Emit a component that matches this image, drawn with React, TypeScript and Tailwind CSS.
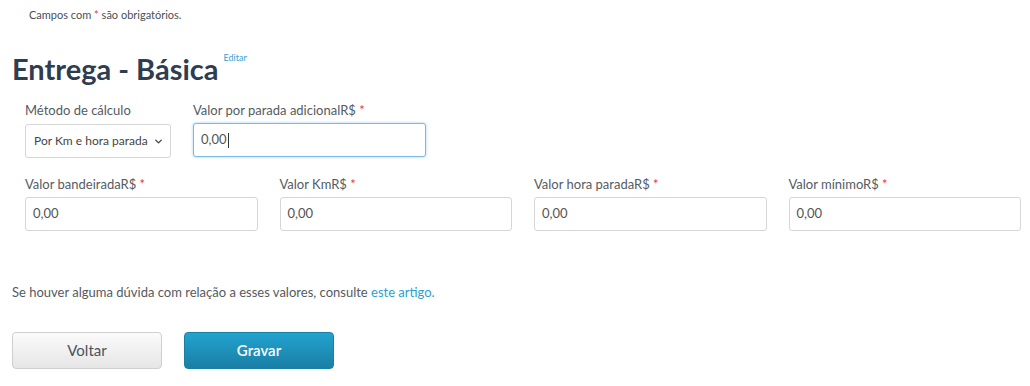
import { ChevronDown } from 'lucide-react'

const FONT = { fontFamily: 'Lato, "Open Sans", sans-serif' }

function Req() {
  return <span className="text-[#e23b3b]"> *</span>
}

function Field({ label, value = '0,00', focused = false }: { label: string; value?: string; focused?: boolean }) {
  return (
    <div className="flex flex-col">
      <label className="text-[13px] leading-[16px] text-[#555b63] mb-[5px]">
        {label}<Req />
      </label>
      <div
        className={
          'h-[34px] rounded-[3px] bg-white flex items-center px-[7px] text-[13px] text-[#555]' +
          (focused
            ? ' border border-[#7db8e8] shadow-[0_0_3px_rgba(102,175,233,0.6)]'
            : ' border border-[#d6d6d6]')
        }
      >
        {value}
        {focused && <span className="w-px h-[15px] bg-[#333] ml-px" />}
      </div>
    </div>
  )
}

export default function App() {
  return (
    <div className="w-[1030px] h-[386px] bg-white text-[#555] overflow-hidden" style={FONT}>
      <p className="pl-[29px] pt-[8px] text-[11px] leading-[14px] text-[#4a4f55]">
        Campos com <span className="text-[#e23b3b]">*</span> são obrigatórios.
      </p>

      <div className="flex items-start pl-[12px] mt-[30px]">
        <h1 className="text-[29px] leading-[34px] font-bold text-[#2e3d4f]">Entrega - Básica</h1>
        <a className="text-[9px] text-[#35a4d4] ml-[5px] mt-[-1px]">Editar</a>
      </div>

      <div className="flex gap-[22px] pl-[25px] mt-[16px]">
        <div className="flex flex-col w-[146px]">
          <label className="text-[13px] leading-[16px] text-[#555b63] mb-[6px]">Método de cálculo</label>
          <div className="h-[34px] rounded-[3px] border border-[#d6d6d6] bg-white flex items-center justify-between pl-[8px] pr-[6px] text-[12px] text-[#444] whitespace-nowrap">
            Por Km e hora parada
            <ChevronDown size={11} strokeWidth={3} className="text-[#444] shrink-0" />
          </div>
        </div>
        <div className="w-[233px]">
          <Field label="Valor por parada adicionalR$" focused />
        </div>
      </div>

      <div className="grid grid-cols-4 gap-[22px] pl-[25px] pr-[9px] mt-[18px]">
        <Field label="Valor bandeiradaR$" />
        <Field label="Valor KmR$" />
        <Field label="Valor hora paradaR$" />
        <Field label="Valor mínimoR$" />
      </div>

      <p className="pl-[12px] mt-[53px] text-[13px] leading-[16px] text-[#555a60]">
        Se houver alguma dúvida com relação a esses valores, consulte{' '}
        <a className="text-[#2a9fd0]">este artigo.</a>
      </p>

      <div className="flex gap-[22px] pl-[12px] mt-[32px]">
        <button className="w-[150px] h-[37px] rounded-[4px] border border-[#cfcfcf] bg-gradient-to-b from-[#fbfbfb] to-[#e6e6e6] text-[15px] text-[#4a5260]">
          Voltar
        </button>
        <button className="w-[150px] h-[37px] rounded-[4px] border border-[#1b7ea3] bg-gradient-to-b from-[#22a3cf] to-[#1a7fa5] text-[15px] font-semibold text-white">
          Gravar
        </button>
      </div>
    </div>
  )
}
